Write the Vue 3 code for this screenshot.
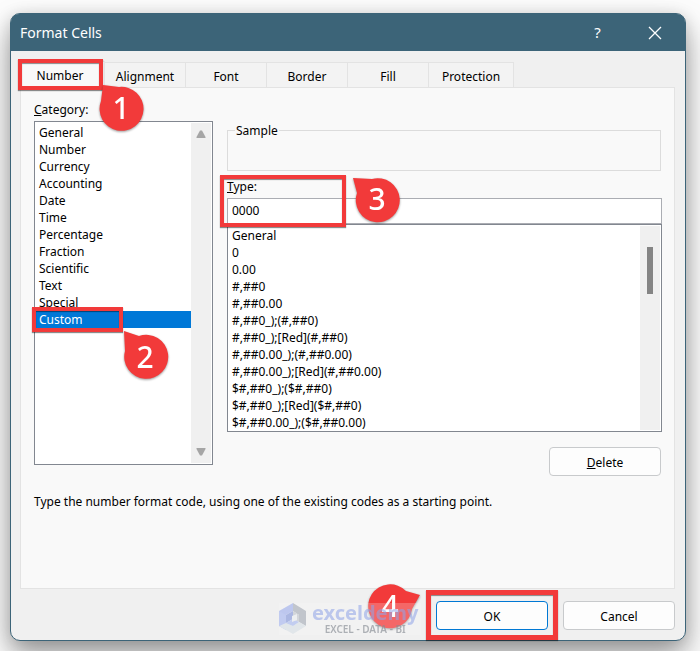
<script setup>
import { ref } from 'vue'

const tabs = ['Number', 'Alignment', 'Font', 'Border', 'Fill', 'Protection']
const activeTab = ref('Number')

const categories = [
  'General', 'Number', 'Currency', 'Accounting', 'Date', 'Time',
  'Percentage', 'Fraction', 'Scientific', 'Text', 'Special', 'Custom',
]
const category = ref('Custom')

const formats = [
  'General', '0', '0.00', '#,##0', '#,##0.00', '#,##0_);(#,##0)',
  '#,##0_);[Red](#,##0)', '#,##0.00_);(#,##0.00)', '#,##0.00_);[Red](#,##0.00)',
  '$#,##0_);($#,##0)', '$#,##0_);[Red]($#,##0)', '$#,##0.00_);($#,##0.00)',
]
const formatCode = ref('0000')
const pickedFormat = ref(null)
</script>

<template>
  <main class="page">
    <section class="dialog" role="dialog" aria-labelledby="dialog-title">
      <header class="titlebar">
        <h1 id="dialog-title">Format Cells</h1>
        <button class="title-btn" type="button">?</button>
        <button class="title-btn" type="button" aria-label="Close">
          <svg width="14" height="14" viewBox="0 0 14 14">
            <path d="M1 1L13 13M13 1L1 13" fill="none" stroke="#fff" stroke-width="1.3" />
          </svg>
        </button>
      </header>

      <div class="body">
        <nav class="tabs" role="tablist">
          <div v-for="tab in tabs" :key="tab" class="tab-slot">
            <button
              class="tab"
              :class="{ active: tab === activeTab }"
              type="button"
              role="tab"
              :aria-selected="tab === activeTab"
              @click="activeTab = tab"
            >{{ tab }}</button>
            <template v-if="tab === 'Number'">
              <span class="frame frame-tab"></span>
              <svg class="callout callout-1" width="46" height="50" viewBox="0 0 46 50">
                <path d="M5 4L21 6A22 22 0 1 1 3 20Z" />
                <text x="23" y="38">1</text>
              </svg>
            </template>
          </div>
        </nav>

        <div class="panel">
          <div class="columns">
            <div class="left">
              <label for="category"><u>C</u>ategory:</label>
              <div class="listbox category-list">
                <select id="category" v-model="category" size="12">
                  <option v-for="c in categories" :key="c" :value="c">{{ c }}</option>
                </select>
                <div class="scrollbar arrows">
                  <svg width="10" height="8" viewBox="0 0 10 8"><path d="M4 0.5H6L9.5 7V8H0.5V7Z" /></svg>
                  <svg width="10" height="8" viewBox="0 0 10 8"><path d="M4 7.5H6L9.5 1V0H0.5V1Z" /></svg>
                </div>
                <span class="frame frame-custom"></span>
                <svg class="callout callout-2" width="46" height="52" viewBox="0 0 46 52">
                  <path d="M2 1L17 6A22 22 0 1 1 3 21Z" />
                  <text x="23" y="38">2</text>
                </svg>
              </div>
            </div>

            <div class="right">
              <fieldset class="sample">
                <legend>Sample</legend>
              </fieldset>
              <div class="type-block">
                <label id="type-label" for="type"><u>T</u>ype:</label>
                <input id="type" v-model="formatCode" type="text" />
                <span class="frame frame-type"></span>
                <svg class="callout callout-3" width="48" height="46" viewBox="0 0 48 46">
                  <path d="M1 1L20 2A22 22 0 1 1 5 16Z" />
                  <text x="25" y="33">3</text>
                </svg>
              </div>
              <div class="listbox format-list">
                <select v-model="pickedFormat" size="12" aria-labelledby="type-label">
                  <option v-for="f in formats" :key="f" :value="f">{{ f }}</option>
                </select>
                <div class="scrollbar"><span class="thumb"></span></div>
              </div>
              <button class="btn delete" type="button"><span><u>D</u>elete</span></button>
            </div>
          </div>
          <p class="hint">Type the number format code, using one of the existing codes as a starting point.</p>
        </div>

        <footer class="actions">
          <div class="ok-slot">
            <button class="btn primary" type="button">OK</button>
            <svg class="callout callout-4" width="54" height="46" viewBox="0 0 54 46">
              <path d="M52 11L38 7A22 22 0 1 0 44 25Z" />
              <text x="22" y="33">4</text>
            </svg>
            <div class="watermark">
              <svg width="28" height="31" viewBox="0 0 28 31">
                <path d="M14 0L0 8V23L7 27V12L14 8Z" fill="#b5c1ee" />
                <path d="M14 0L27 8V23L20 19V12L14 8Z" fill="#b9bec6" />
                <path d="M0 23L14 31L27 23L20 19L14 23L7 19Z" fill="#dfe5e9" />
                <path d="M0 8L7 12V20L0 23Z" fill="#b9c5f1" />
                <path d="M7 12L14 8V16L7 20Z" fill="#9faee0" />
                <path d="M14 8L20 12V19L14 16Z" fill="#cdd1d7" />
                <path d="M7 20L14 16L20 19L14 23Z" fill="#bac7f0" />
                <path d="M13 13L18 11V17L13 19Z" fill="#eceef1" />
              </svg>
              <div class="brand">
                <strong>exceldemy</strong>
                <small>EXCEL - DATA - BI</small>
              </div>
            </div>
            <span class="frame frame-ok"></span>
          </div>
          <button class="btn" type="button">Cancel</button>
        </footer>
      </div>
    </section>
  </main>
</template>

<style>
body {
  margin: 0;
  background: #fcfcfc;
}
</style>

<style scoped>
* {
  box-sizing: border-box;
}

.page {
  padding: 13px 14px 10px 10px;
  overflow: hidden;
  font-family: "Noto Sans", "Open Sans", sans-serif;
  font-size: 12px;
  line-height: 17px;
  color: #000;
}

.page button,
.page input,
.page select {
  font: inherit;
  color: inherit;
  margin: 0;
}

.dialog {
  border: 1px solid #3c6478;
  border-radius: 10px;
  background: #f0f0f0;
  box-shadow: 0 16px 30px rgba(0, 0, 0, 0.36), 0 2px 16px rgba(0, 0, 0, 0.14);
}

.titlebar {
  display: flex;
  align-items: center;
  height: 37px;
  padding: 0 2px 0 9px;
  border-radius: 8px 8px 0 0;
  background: #3c6478;
  color: #fff;
}

.titlebar h1 {
  flex: 1;
  margin: 0;
  font-size: 14px;
  font-weight: 400;
}

.page .title-btn {
  display: flex;
  align-items: center;
  justify-content: center;
  width: 57px;
  height: 37px;
  padding: 0;
  border: 0;
  background: none;
  color: #fff;
  font-size: 15px;
}

.body {
  padding: 10px 10px 10px 9px;
}

.tabs {
  display: flex;
  align-items: flex-end;
}

.tab-slot {
  position: relative;
  width: 81px;
}

.tab-slot:first-child,
.tab-slot:last-child {
  width: 85px;
}

.tab {
  display: block;
  width: 100%;
  height: 25px;
  padding: 2px 0 0;
  border: 1px solid #e3e3e3;
  border-width: 1px 1px 0 0;
  background: #f3f3f3;
}

.tab.active {
  height: 27px;
  margin-bottom: -1px;
  padding: 0 4px 0 0;
  background: #f9f9f9;
}

.panel {
  padding: 13px 12px 78px 13px;
  border: 1px solid #e3e3e3;
  background: #f9f9f9;
}

.columns {
  display: grid;
  grid-template-columns: 179px 1fr;
  column-gap: 14px;
  align-items: start;
}

.left,
.right,
.type-block {
  display: flex;
  flex-direction: column;
}

.left {
  gap: 3px;
}

.right {
  padding-top: 21px;
}

.listbox {
  display: flex;
  position: relative;
  padding: 1px;
  border: 1px solid #828790;
  background: #fff;
}

.category-list {
  height: 344px;
}

.format-list {
  height: 208px;
}

.listbox select {
  flex: 1;
  min-width: 0;
  height: 100%;
  padding: 1px 0 0;
  border: 0;
  border-radius: 0;
  outline: 0;
  background: #fff;
  overflow: hidden;
  scrollbar-width: none;
}

.listbox option {
  height: 17px;
  min-height: 17px;
  padding: 0 3px;
  line-height: 17px;
}

.category-list option:checked {
  background: #0078d7 linear-gradient(#0078d7, #0078d7);
  color: #fff;
}

.scrollbar {
  display: flex;
  flex-direction: column;
  width: 20px;
  background: #f0f0f0;
}

.arrows {
  align-items: center;
  justify-content: space-between;
  padding: 7px 0;
  fill: #a5a5a5;
}

.thumb {
  width: 6px;
  height: 47px;
  margin: 21px 7px;
  background: #858585;
}

.sample {
  height: 49px;
  min-width: 0;
  margin: 0 1px 7px 0;
  padding: 0;
  border: 1px solid #dcdcdc;
}

.sample legend {
  margin-left: 7px;
  padding: 0 1px;
}

.type-block {
  position: relative;
  gap: 3px;
}

.type-block input {
  width: 100%;
  height: 26px;
  padding: 0 4px 2px;
  border: 1px solid #abadb3;
  border-radius: 0;
  outline: 0;
  background: #fff;
}

.btn {
  width: 112px;
  height: 29px;
  padding: 1px 0 0;
  border: 1px solid #c8cacc;
  border-radius: 4px;
  background: #fdfdfd;
}

.btn.primary {
  border-color: #0078d4;
}

.delete {
  align-self: flex-end;
  margin: 15px 1px 0 0 !important;
}

.hint {
  margin: 17px 0 0;
}

.actions {
  display: flex;
  justify-content: flex-end;
  gap: 15px;
  padding-top: 12px;
}

.ok-slot {
  position: relative;
}

/* Tutorial annotations laid over the dialog */
.frame {
  position: absolute;
  z-index: 2;
  border: 4px solid #f23a3a;
  box-shadow: 0 1px 1px rgba(0, 0, 0, 0.45), inset 0 1px 1px rgba(0, 0, 0, 0.45);
  pointer-events: none;
}

.frame-tab {
  inset: -2px 2px -3px -2px;
}

.frame-custom {
  top: 185px;
  left: -3px;
  width: 91px;
  height: 25px;
}

.frame-type {
  top: -3px;
  left: -7px;
  width: 126px;
  height: 52px;
}

.frame-ok {
  inset: -11px -10px -10px;
  border-width: 5px;
}

.callout {
  position: absolute;
  z-index: 3;
  overflow: visible;
  filter: drop-shadow(0 1px 1px rgba(0, 0, 0, 0.4));
  pointer-events: none;
}

.callout path {
  fill: #f23a3a;
}

.callout text {
  fill: #fff;
  font-size: 30px;
  font-weight: 500;
  text-anchor: middle;
}

.callout-1 {
  top: 20px;
  left: 78px;
}

.callout-2 {
  top: 208px;
  left: 87px;
}

.callout-3 {
  top: -1px;
  left: 125px;
}

.callout-4 {
  top: -17px;
  left: -68px;
}

.watermark {
  display: flex;
  position: absolute;
  z-index: 4;
  top: 2px;
  right: 127px;
  gap: 5px;
  width: 142px;
  height: 32px;
  background: rgba(249, 249, 249, 0.28);
  opacity: 0.85;
}

.watermark svg {
  flex: none;
}

.brand {
  display: flex;
  flex-direction: column;
  align-items: center;
  white-space: nowrap;
}

.brand strong {
  color: rgba(150, 168, 232, 0.7);
  font-size: 20px;
  line-height: 20px;
}

.brand small {
  color: rgba(140, 145, 152, 0.8);
  font-size: 10px;
  font-weight: 600;
  line-height: 12px;
}
</style>
